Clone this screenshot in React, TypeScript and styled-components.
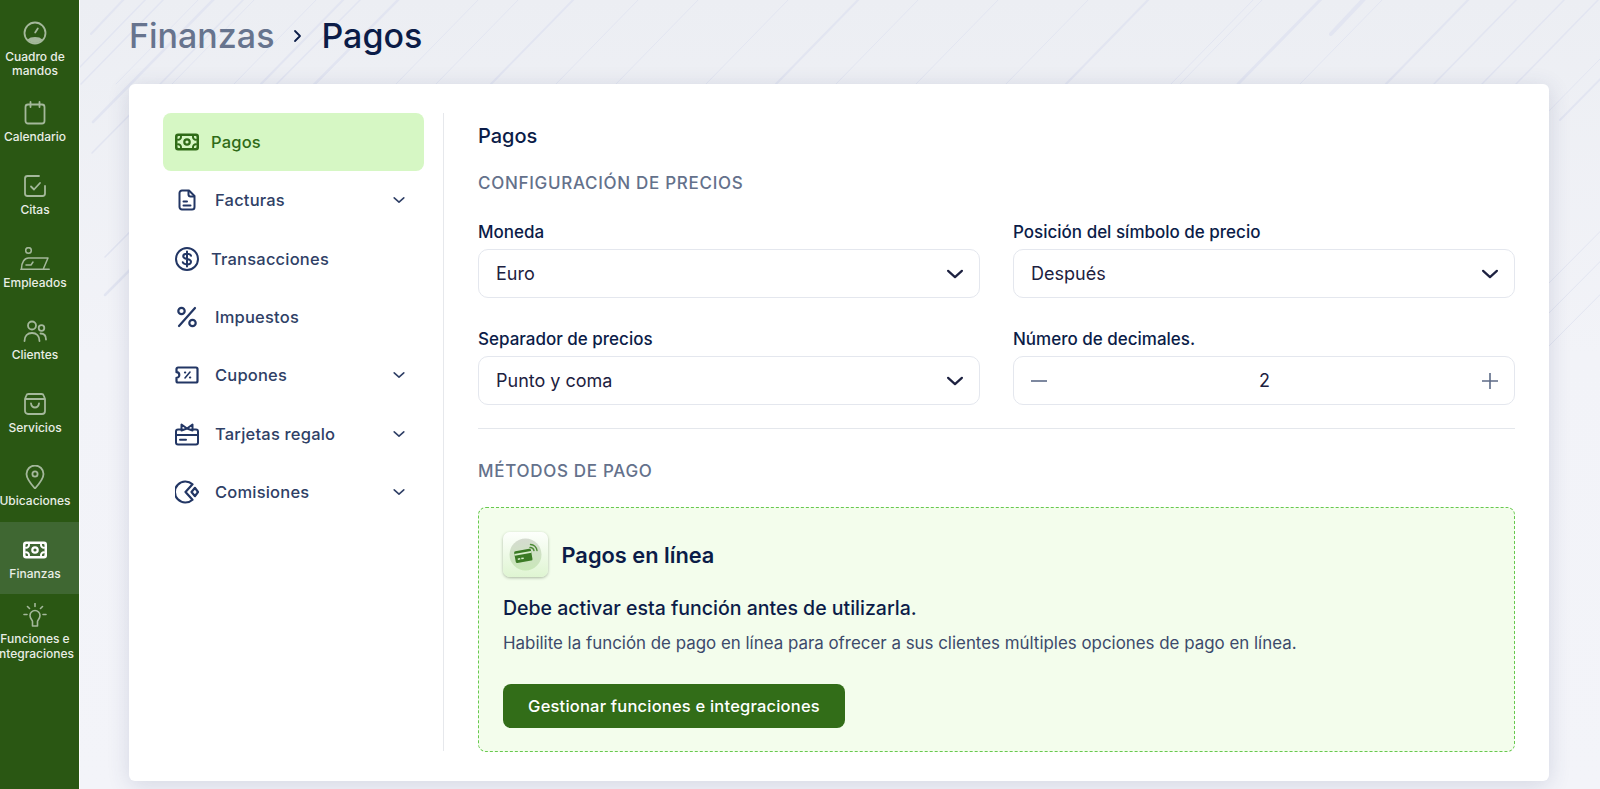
import React from "react";
import styled, { createGlobalStyle } from "styled-components";

const Global = createGlobalStyle`
  html, body { margin: 0; padding: 0; height: 100%; overflow: hidden; }
  body { font-family: Inter, "Noto Sans", sans-serif; background: #f1f2f7; color: #0f1d40; }
  * { box-sizing: border-box; }
`;

const Page = styled.div`
  display: flex;
  width: 1600px;
  height: 789px;
  overflow: hidden;
`;
const Side = styled.nav`
  flex: 0 0 80px;
  height: 100%;
  padding-top: 12px;
  background: #2a5713;
  border-right: 1px solid #fff;
  overflow: hidden;
`;
const SideItem = styled.div<{ $active?: boolean }>`
  height: 72.8px;
  width: 79px;
  padding: 3px 9px 0 0;
  display: flex;
  flex-direction: column;
  align-items: center;
  justify-content: center;
  gap: 5px;
  background: ${(p) => (p.$active ? "#3f6732" : "transparent")};
  color: ${(p) => (p.$active ? "#fff" : "#a4b89b")};
`;
const SideLabel = styled.span`
  font-size: 12px;
  line-height: 14.5px;
  font-weight: 500;
  color: #e9eee6;
  text-align: center;
  white-space: nowrap;
`;
const Main = styled.main`
  position: relative;
  flex: 1;
  height: 100%;
  padding: 0 51px 0 49px;
  background: linear-gradient(180deg, #eceef3 0%, #f2f3f8 45%, #f3f4f9 100%);
`;
const Lines = styled.svg`
  position: absolute;
  left: 0;
  top: 0;
`;
const Crumbs = styled.header`
  position: relative;
  height: 84px;
  padding-bottom: 13px;
  display: flex;
  align-items: center;
  font-size: 34px;
  line-height: 40px;
  font-weight: 500;
`;
const CrumbParent = styled.span`
  color: #67748e;
`;
const CrumbSep = styled.span`
  display: flex;
  width: 47px;
  justify-content: center;
  color: #0b1c48;
`;
const CrumbCurrent = styled.span`
  color: #0b1c48;
`;
const Card = styled.section`
  position: relative;
  height: 697px;
  padding: 29px 34px 30px 33.5px;
  display: flex;
  background: #fff;
  border-radius: 6px;
  box-shadow: 0 4px 22px rgba(50, 60, 110, 0.16);
`;
const SubNav = styled.aside`
  flex: 0 0 281.5px;
  padding-right: 19px;
  border-right: 1px solid #e6e8ec;
`;
const NavRow = styled.div<{ $active?: boolean; $wide?: boolean }>`
  height: 58.3px;
  padding: 0 18px 0 12px;
  display: flex;
  align-items: center;
  gap: ${(p) => (p.$wide ? 16.5 : 12.5)}px;
  border-radius: 8px;
  font-size: 16.5px;
  font-weight: 500;
  letter-spacing: 0.2px;
  background: ${(p) => (p.$active ? "#d6f7c4" : "transparent")};
  color: ${(p) => (p.$active ? "#2f6b17" : "#2f3f66")};
`;
const NavIcon = styled.span<{ $active?: boolean }>`
  display: flex;
  width: 24px;
  height: 24px;
  color: ${(p) => (p.$active ? "#2f6b17" : "#223664")};
  --cut: #d6f7c4;
`;
const NavText = styled.span`
  flex: 1;
`;
const Body = styled.div`
  flex: 1;
  padding-left: 34px;
`;
const H1 = styled.h2`
  margin: 10px 0 0;
  font-size: 20px;
  line-height: 26px;
  font-weight: 500;
  color: #0b1c48;
`;
const Section = styled.h3<{ $top: number }>`
  margin: ${(p) => p.$top}px 0 0;
  font-size: 17px;
  line-height: 22px;
  font-weight: 500;
  letter-spacing: 0.7px;
  color: #64718b;
`;
const Grid = styled.div`
  margin-top: 28px;
  display: grid;
  grid-template-columns: 1fr 1fr;
  column-gap: 33px;
  row-gap: 31px;
`;
const Field = styled.div`
  display: flex;
  flex-direction: column;
  gap: 7px;
`;
const Label = styled.label`
  font-size: 17px;
  line-height: 20px;
  font-weight: 500;
  color: #0b1c48;
`;
const Select = styled.div`
  height: 49px;
  padding: 0 14px 0 17px;
  display: flex;
  align-items: center;
  justify-content: space-between;
  border: 1px solid #e4e7ee;
  border-radius: 10px;
  font-size: 18px;
  color: #1d2140;
  background: #fff;
`;
const Stepper = styled(Select)`
  padding: 0 14px 0 15px;
`;
const Hr = styled.hr`
  margin: 23px 0 0;
  border: 0;
  border-top: 1px solid #e4e7ec;
`;
const Panel = styled.div`
  margin-top: 25px;
  height: 245px;
  padding: 24px 24px 0;
  background: #f3fdec;
  border: 1px dashed #67c94e;
  border-radius: 8px;
`;
const PanelHead = styled.div`
  display: flex;
  align-items: center;
  gap: 13.5px;
`;
const LogoBox = styled.div`
  width: 45px;
  height: 45px;
  display: flex;
  align-items: center;
  justify-content: center;
  border-radius: 7px;
  background: linear-gradient(180deg, #fdfffc 0%, #dff5d2 100%);
  box-shadow: 0 1px 3px rgba(60, 80, 50, 0.4);
`;
const PanelTitle = styled.div`
  font-size: 21.8px;
  line-height: 28px;
  font-weight: 600;
  color: #0b1c48;
`;
const PanelLead = styled.div`
  margin-top: 19px;
  font-size: 19.5px;
  line-height: 24px;
  font-weight: 500;
  color: #0b1c48;
`;
const PanelText = styled.div`
  margin-top: 11px;
  font-size: 16.9px;
  line-height: 24px;
  color: #3c4a6b;
`;
const Btn = styled.button`
  display: block;
  margin-top: 29px;
  width: 342px;
  height: 44px;
  border: 0;
  border-radius: 8px;
  background: #326d18;
  color: #fff;
  font-family: inherit;
  font-size: 16.5px;
  font-weight: 500;
  letter-spacing: 0.2px;
`;

const S = (p: { children: React.ReactNode; size?: number; sw?: number }) => (
  <svg width={p.size ?? 24} height={p.size ?? 24} viewBox="0 0 24 24" fill="none" stroke="currentColor"
    strokeWidth={p.sw ?? 1.8} strokeLinecap="round" strokeLinejoin="round">{p.children}</svg>
);

const Money = () => (
  <S>
    <rect x="0" y="3.500" width="24" height="17" rx="3" fill="currentColor" stroke="none" />
    <rect x="2.500" y="6" width="19" height="12" rx="1" fill="var(--cut)" stroke="none" />
    <circle cx="12" cy="12" r="2.700" fill="none" strokeWidth="2.200" />
    <path d="M3 9.800a3 3 0 0 0 3-3.300M21 9.800a3 3 0 0 1-3-3.300M3 14.200a3 3 0 0 1 3 3.300M21 14.200a3 3 0 0 0-3 3.300" strokeWidth="2" />
  </S>
);
const Gauge = () => (
  <S>
    <circle cx="12" cy="12" r="10.500" />
    <path d="M12.200 11.500l2.600-4" />
    <path d="M4.500 18.500a9 5.500 0 0 1 15 0a10 10 0 0 1-15 0z" fill="currentColor" stroke="none" />
  </S>
);
const Calendar = () => (
  <S>
    <rect x="2.500" y="3.500" width="19" height="19" rx="2.500" />
    <path d="M7.500 1v5M16.500 1v5" />
  </S>
);
const CheckBox = () => (
  <S>
    <path d="M16 2H4.500A2.500 2.500 0 0 0 2 4.500v15A2.500 2.500 0 0 0 4.500 22h15a2.500 2.500 0 0 0 2.500-2.500V12" />
    <path d="M8 12.500l3 3 6-6.500" />
  </S>
);
const Employee = () => (
  <svg width="30" height="24" viewBox="0 0 30 24" fill="none" stroke="currentColor" strokeWidth="1.500" strokeLinecap="round" strokeLinejoin="round">
    <circle cx="8.500" cy="3.500" r="2.800" />
    <path d="M.8 22.300h28.400M13 11h15l-4.500 10.500M1.500 21.500c0-6 3-10.500 7-10.500H13M6 18h5l2-3" />
  </svg>
);
const Users = () => (
  <S>
    <circle cx="9" cy="6.500" r="4" />
    <circle cx="18.500" cy="9" r="2.800" />
    <path d="M1.500 22c0-5 3-8 7.500-8s7.500 3 7.500 8M17.500 14.500c3.500 0 5.500 2.500 5.500 6" />
  </S>
);
const Bag = () => (
  <S>
    <path d="M5.500 2h13a2.500 2.500 0 0 1 2.300 1.700L22 7v12a3 3 0 0 1-3 3H5a3 3 0 0 1-3-3V7l1.200-3.300A2.500 2.500 0 0 1 5.500 2zM2 7h20" />
    <path d="M8 11.500c.5 2.800 2 4 4 4s3.500-1.200 4-4" />
  </S>
);
const Pin = () => (
  <S>
    <path d="M12 23.500c-5-5.500-8.500-10-8.500-14.500a8.500 8.500 0 0 1 17 0c0 4.500-3.500 9-8.500 14.500z" />
    <circle cx="12" cy="9" r="2.600" />
  </S>
);
const Bulb = () => (
  <S sw={1.600}>
    <path d="M12 .5v3M4.500 3.500l2 2M19.500 3.500l-2 2M1 11.500h3M20 11.500h3" />
    <path d="M9.500 23h5v-4.500c0-1.500 2.500-2.500 2.500-6a5 5 0 0 0-10 0c0 3.500 2.500 4.500 2.500 6z" />
  </S>
);
const FileDoc = () => (
  <S sw={2}>
    <path d="M14 2.500H7A2.500 2.500 0 0 0 4.500 5v14A2.500 2.500 0 0 0 7 21.500h10a2.500 2.500 0 0 0 2.500-2.500V8z" />
    <path d="M13.500 3v3.500a2 2 0 0 0 2 2h3.500M8.500 13.500h3.500M8.500 17.500h7" />
  </S>
);
const Dollar = () => (
  <S sw={2}>
    <circle cx="12" cy="12" r="11" />
    <path d="M16 8.800c-.5-1.500-2-2.100-4-2.100s-3.800.8-3.800 2.600c0 3.900 7.800 1.700 7.800 5.500 0 1.900-1.800 2.600-4 2.600s-3.700-.6-4.200-2.100M12 4.500v15" />
  </S>
);
const Percent = () => (
  <S sw={2.200}>
    <path d="M20 3L4 21" />
    <circle cx="6.500" cy="6" r="3.200" />
    <circle cx="17.500" cy="18" r="3.200" />
  </S>
);
const Coupon = () => (
  <S sw={2.200}>
    <path d="M1.500 6a1.500 1.500 0 0 1 1.500-1.500h18A1.500 1.500 0 0 1 22.500 6v12a1.500 1.500 0 0 1-1.500 1.500H3A1.500 1.500 0 0 1 1.500 18v-3.200a2.800 2.800 0 0 0 0-5.600z" />
    <path d="M10 15l5-6" strokeWidth="1.600" />
    <path d="M10 9.500h.2M15 14.500h.2" strokeWidth="2.200" />
  </S>
);
const Gift = () => (
  <S sw={2}>
    <path d="M7 7.500H3A2 2 0 0 0 1 9.500v11A2 2 0 0 0 3 22.500h18a2 2 0 0 0 2-2v-11a2 2 0 0 0-2-2h-4" />
    <path d="M1 13h22M5 17.800h6" />
    <path d="M12 6.500L6.500 2.500v6zM12 6.500l5.500-4v6z" />
  </S>
);
const Pac = () => (
  <S sw={2.200}>
    <path d="M17.500 4.300A10.500 10.500 0 1 0 17.500 19.700L10.500 12z" />
    <path d="M16.500 12l3.500-4.200 3 4.200-3 4.200z" />
  </S>
);
const Chev = ({ size = 14, sw = 1.800 }: { size?: number; sw?: number }) => (
  <svg width={size} height={size} viewBox="0 0 16 16" fill="none" stroke="currentColor" strokeWidth={sw} strokeLinecap="round" strokeLinejoin="round">
    <path d="M2.500 5.500l5.500 5 5.500-5" />
  </svg>
);
const CardLogo = () => (
  <svg width="33" height="33" viewBox="0 0 33 33">
    <defs>
      <linearGradient id="lg" x1="0" y1="0" x2="0" y2="1">
        <stop offset="0" stopColor="#d5dbd0" />
        <stop offset="1" stopColor="#c9e8b8" />
      </linearGradient>
    </defs>
    <circle cx="16.500" cy="16.500" r="16" fill="url(#lg)" />
    <g transform="rotate(-10 14 19)">
      <rect x="6" y="12" width="17" height="12" rx="1.500" fill="#3b7a25" />
      <rect x="6" y="14.500" width="17" height="1.800" fill="#d8edcb" />
      <rect x="8.500" y="19.500" width="2.500" height="1.500" fill="#d8edcb" />
      <rect x="12" y="19.500" width="2.500" height="1.500" fill="#d8edcb" />
    </g>
    <path d="M21 9.500a4 4 0 0 1 4 3M21.500 6.500a7 7 0 0 1 6.500 6" fill="none" stroke="#4b8a33" strokeWidth="1.400" strokeLinecap="round" />
  </svg>
);

const lines: [number, number, number][] = [
  [125, 34, 2], [147, 68, 1.500], [215, 122, 2.500], [245, 153, 1.500], [362, 257, 1.500], [400, 295, 2.500],
  [165, 84, 1.500], [200, 84, 1], [256, 84, 1], [318, 84, 1], [345, 84, 2], [400, 84, 1], [480, 84, 1], [520, 84, 1],
  [575, 84, 2], [640, 84, 1], [700, 84, 1], [790, 84, 1], [860, 84, 2], [920, 84, 1], [1000, 84, 1], [1090, 84, 1], [1150, 84, 2],
  [1255, 84, 1], [1264, 84, 1], [1322, 84, 3], [1365, 34, 4], [1384, 84, 1], [1470, 84, 2],
  [1518, 84, 1.500], [1566, 84, 1.500], [1600, 84, 1.500], [1660, 120, 1], [1680, 120, 2],
  [1832, 290, 1], [1862, 320, 1], [1895, 350, 1],
];

const side: { label: React.ReactNode; icon: React.ReactNode; active?: boolean }[] = [
  { label: <>Cuadro de<br />mandos</>, icon: <Gauge /> },
  { label: "Calendario", icon: <Calendar /> },
  { label: "Citas", icon: <CheckBox /> },
  { label: "Empleados", icon: <Employee /> },
  { label: "Clientes", icon: <Users /> },
  { label: "Servicios", icon: <Bag /> },
  { label: "Ubicaciones", icon: <Pin /> },
  { label: "Finanzas", icon: <Money />, active: true },
  { label: <>Funciones e<br />integraciones</>, icon: <Bulb /> },
];

const nav: { label: string; icon: React.ReactNode; active?: boolean; wide?: boolean; chev?: boolean }[] = [
  { label: "Pagos", icon: <Money />, active: true },
  { label: "Facturas", icon: <FileDoc />, wide: true, chev: true },
  { label: "Transacciones", icon: <Dollar /> },
  { label: "Impuestos", icon: <Percent />, wide: true },
  { label: "Cupones", icon: <Coupon />, wide: true, chev: true },
  { label: "Tarjetas regalo", icon: <Gift />, wide: true, chev: true },
  { label: "Comisiones", icon: <Pac />, wide: true, chev: true },
];

const SideCut = styled.span<{ $active?: boolean }>`
  display: flex;
  --cut: ${(p) => (p.$active ? "#3f6732" : "#2a5713")};
`;

function Chevright() {
  return (
    <svg width="14" height="18" viewBox="0 0 14 18" fill="none" stroke="currentColor" strokeWidth="1.800" strokeLinecap="round" strokeLinejoin="round">
      <path d="M4 4l5 5-5 5" />
    </svg>
  );
}

export default function App() {
  return (
    <Page>
      <Global />
      <Side>
        {side.map((s, i) => (
          <SideItem key={i} $active={s.active}>
            <SideCut $active={s.active}>{s.icon}</SideCut>
            <SideLabel>{s.label}</SideLabel>
          </SideItem>
        ))}
      </Side>
      <Main>
        <Lines width="1520" height="420" viewBox="80 0 1520 420" fill="none">
          {lines.map(([x, len, w], i) => (
            <line key={i} x1={x} y1={-2} x2={x - len} y2={len} stroke="#e2e5f1" strokeWidth={w} strokeLinecap="round" />
          ))}
        </Lines>
        <Crumbs>
          <CrumbParent>Finanzas</CrumbParent>
          <CrumbSep><Chevright /></CrumbSep>
          <CrumbCurrent>Pagos</CrumbCurrent>
        </Crumbs>
        <Card>
          <SubNav>
            {nav.map((n) => (
              <NavRow key={n.label} $active={n.active} $wide={n.wide}>
                <NavIcon $active={n.active}>{n.icon}</NavIcon>
                <NavText>{n.label}</NavText>
                {n.chev && <Chev />}
              </NavRow>
            ))}
          </SubNav>
          <Body>
            <H1>Pagos</H1>
            <Section $top={23}>CONFIGURACIÓN DE PRECIOS</Section>
            <Grid>
              <Field>
                <Label>Moneda</Label>
                <Select>Euro<Chev size={20} sw={1.800} /></Select>
              </Field>
              <Field>
                <Label>Posición del símbolo de precio</Label>
                <Select>Después<Chev size={20} sw={1.800} /></Select>
              </Field>
              <Field>
                <Label>Separador de precios</Label>
                <Select>Punto y coma<Chev size={20} sw={1.800} /></Select>
              </Field>
              <Field>
                <Label>Número de decimales.</Label>
                <Stepper>
                  <svg width="20" height="20" viewBox="0 0 20 20" stroke="#5d6b87" strokeWidth="1.600"><path d="M2 10h16" /></svg>
                  2
                  <svg width="20" height="20" viewBox="0 0 20 20" stroke="#5d6b87" strokeWidth="1.600"><path d="M2 10h16M10 2v16" /></svg>
                </Stepper>
              </Field>
            </Grid>
            <Hr />
            <Section $top={31}>MÉTODOS DE PAGO</Section>
            <Panel>
              <PanelHead>
                <LogoBox><CardLogo /></LogoBox>
                <PanelTitle>Pagos en línea</PanelTitle>
              </PanelHead>
              <PanelLead>Debe activar esta función antes de utilizarla.</PanelLead>
              <PanelText>Habilite la función de pago en línea para ofrecer a sus clientes múltiples opciones de pago en línea.</PanelText>
              <Btn>Gestionar funciones e integraciones</Btn>
            </Panel>
          </Body>
        </Card>
      </Main>
    </Page>
  );
}
